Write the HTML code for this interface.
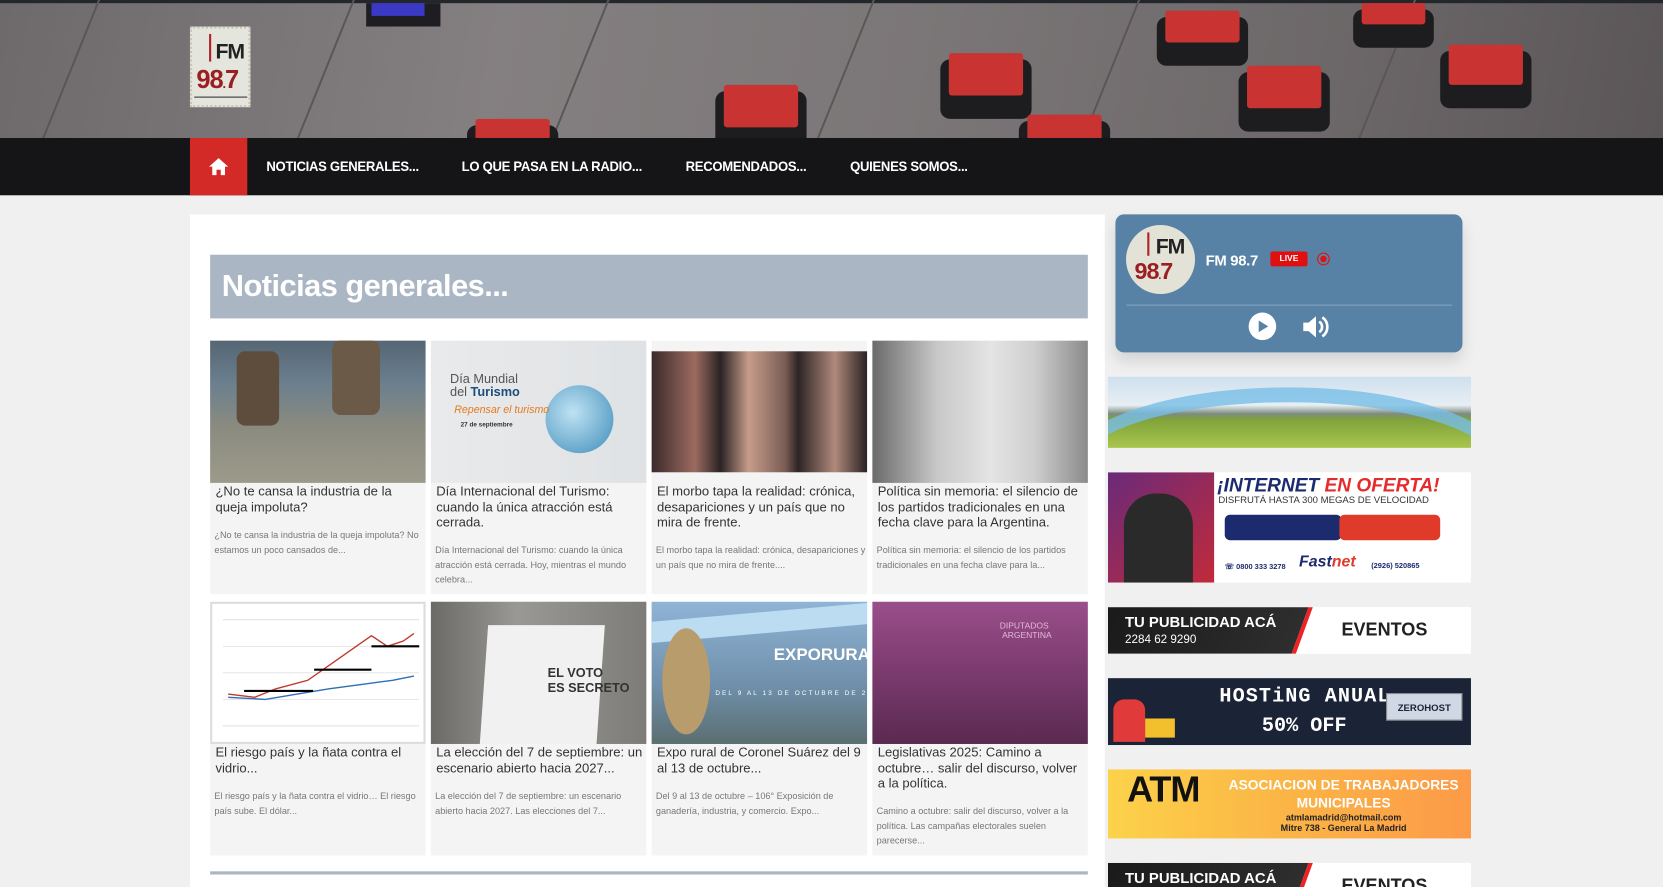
<!DOCTYPE html>
<html><head><meta charset="utf-8">
<style>
*{margin:0;padding:0;box-sizing:border-box}
html,body{width:1663px;height:887px;overflow:hidden;background:#f0f0f0;font-family:"Liberation Sans",sans-serif}
#w{position:absolute;left:0;top:0;width:1567px;height:836px;transform:scale(1.0613);transform-origin:0 0;background:#f0f0f0;overflow:hidden}
.a{position:absolute}
.hdr{left:0;top:0;width:1567px;height:130px;overflow:hidden;background:linear-gradient(100deg,#6e6a6c 0%,#847f80 30%,#7b7677 55%,#6c6768 80%,#5a5557 100%)}
.stripe{position:absolute;top:-20px;width:2px;height:200px;background:#5a5657;transform:skewX(-22deg)}
.btn{position:absolute;background:#c93331;border-radius:3px;box-shadow:0 14px 0 8px #1d1d1f}
.nav{left:0;top:130px;width:1567px;height:54px;background:#151517}
.nav span{position:absolute;top:19px;color:#fff;font-weight:bold;font-size:13px;letter-spacing:-.3px;transform:scaleX(.95);transform-origin:0 0}
.panel{left:179px;top:202px;width:862px;height:700px;background:#fff}
.hbar{left:198px;top:240px;width:827px;height:60px;background:#aab6c3;color:#fff;font-weight:bold;font-size:29px;padding:14px 0 0 11px;letter-spacing:-.5px}
.card{position:absolute;width:203px;background:#f4f4f4}
.img{position:absolute;left:0;top:0;width:203px;height:134px}
.t{position:absolute;left:5px;top:135px;width:196px;font-size:12.3px;line-height:14.5px;color:#333}
.e{position:absolute;left:4px;width:198px;font-size:8.6px;line-height:14px;color:#777}
.ban{position:absolute;left:1044px;width:342px;overflow:hidden}
</style></head><body><div id="w">
<div class="a hdr">
 <div style="position:absolute;left:0;top:0;width:1567px;height:3px;background:#23272b"></div>
 <div class="stripe" style="left:60px"></div><div class="stripe" style="left:300px"></div><div class="stripe" style="left:540px"></div><div class="stripe" style="left:790px"></div><div class="stripe" style="left:1040px"></div><div class="stripe" style="left:1300px"></div>
 <div style="position:absolute;left:345px;top:3px;width:70px;height:22px;background:#1e1e22"></div>
 <div style="position:absolute;left:350px;top:3px;width:50px;height:12px;background:#3a39c6"></div>
 <div class="btn" style="left:448px;top:112px;width:70px;height:30px"></div>
 <div class="btn" style="left:682px;top:80px;width:70px;height:40px"></div>
 <div class="btn" style="left:894px;top:50px;width:70px;height:40px"></div>
 <div class="btn" style="left:968px;top:108px;width:70px;height:30px"></div>
 <div class="btn" style="left:1098px;top:10px;width:70px;height:30px"></div>
 <div class="btn" style="left:1175px;top:62px;width:70px;height:40px"></div>
 <div class="btn" style="left:1283px;top:3px;width:60px;height:20px"></div>
 <div class="btn" style="left:1365px;top:42px;width:70px;height:38px"></div>
 <div style="position:absolute;left:179px;top:25px;width:57px;height:76px;background:#e4e5dc;border:2px dotted #c9c4b6"></div>
 <div style="position:absolute;left:197px;top:32px;width:2px;height:26px;background:#b02226"></div>
 <div style="position:absolute;left:203px;top:38px;font:bold 20px 'Liberation Sans Narrow','Liberation Sans',sans-serif;color:#222;letter-spacing:-1px">FM</div>
 <div style="position:absolute;left:185px;top:62px;font:bold 24px 'Liberation Sans Narrow','Liberation Sans',sans-serif;color:#9b1f22;letter-spacing:-1px">98<span style="font-size:12px">.</span>7</div>
 <div style="position:absolute;left:183px;top:91px;width:50px;height:1px;background:#333"></div>
</div>
<div class="a nav">
 <div style="position:absolute;left:179px;top:0;width:54px;height:54px;background:#d42a27"></div>
 <svg style="position:absolute;left:196px;top:18px" width="20" height="18" viewBox="0 0 20 18"><path d="M10 1L1 9h3v8h4v-5h4v5h4V9h3z" fill="#fff"/></svg>
 <span style="left:251px">NOTICIAS GENERALES...</span>
 <span style="left:435px">LO QUE PASA EN LA RADIO...</span>
 <span style="left:646px">RECOMENDADOS...</span>
 <span style="left:801px">QUIENES SOMOS...</span>
</div>
<div class="a panel"></div>
<div class="a hbar">Noticias generales...</div>

<div class="card" style="left:198px;top:321px;height:239px">
 <div class="img" style="background:linear-gradient(180deg,#556674 0%,#6b7f8e 30%,#8a8b80 60%,#9c9a8a 100%)"><div style="position:absolute;left:25px;top:10px;width:40px;height:70px;background:#5e4c3c;border-radius:8px"></div><div style="position:absolute;left:115px;top:0;width:45px;height:70px;background:#6a5a47;border-radius:8px"></div></div>
 <div class="t">¿No te cansa la industria de la queja impoluta?</div>
 <div class="e" style="top:176px">¿No te cansa la industria de la queja impoluta? No estamos un poco cansados de...</div>
</div>
<div class="card" style="left:406px;top:321px;height:239px">
 <div class="img" style="background:linear-gradient(90deg,#e9eaec,#dfe2e4)"><div style="position:absolute;left:108px;top:42px;width:64px;height:64px;border-radius:50%;background:radial-gradient(circle at 40% 40%,#bfe2f3,#3e8dba)"></div><div style="position:absolute;left:18px;top:30px;font-size:12px;color:#555;line-height:12px">Día Mundial<br>del <b style="color:#1d4e7a">Turismo</b></div><div style="position:absolute;left:22px;top:60px;font-size:10px;color:#e57a1e;font-style:italic">Repensar el turismo</div><div style="position:absolute;left:28px;top:77px;font-size:6px;color:#333;font-weight:bold">27 de septiembre</div></div>
 <div class="t">Día Internacional del Turismo: cuando la única atracción está cerrada.</div>
 <div class="e" style="top:190px">Día Internacional del Turismo: cuando la única atracción está cerrada. Hoy, mientras el mundo celebra...</div>
</div>
<div class="card" style="left:614px;top:321px;height:239px">
 <div class="img" style="top:10px;height:114px;background:linear-gradient(90deg,#3a2a2a 0%,#9c6b60 20%,#2b2325 32%,#c79c8a 45%,#7a5d55 62%,#2c2424 68%,#b08a7c 85%,#2a2222 100%)"></div>
 <div class="t">El morbo tapa la realidad: crónica, desapariciones y un país que no mira de frente.</div>
 <div class="e" style="top:190px">El morbo tapa la realidad: crónica, desapariciones y un país que no mira de frente....</div>
</div>
<div class="card" style="left:822px;top:321px;height:239px">
 <div class="img" style="background:linear-gradient(90deg,#6a6a6a 0%,#c8c8c8 30%,#e4e4e4 55%,#cfcfcf 75%,#8a8a8a 100%)"></div>
 <div class="t">Política sin memoria: el silencio de los partidos tradicionales en una fecha clave para la Argentina.</div>
 <div class="e" style="top:190px">Política sin memoria: el silencio de los partidos tradicionales en una fecha clave para la...</div>
</div>

<div class="card" style="left:198px;top:567px;height:239px">
 <div class="img" style="background:#fff;border:2px solid #ddd"><svg width="199" height="130"><g stroke="#ccc" stroke-width=".5"><line x1="10" y1="15" x2="195" y2="15"/><line x1="10" y1="40" x2="195" y2="40"/><line x1="10" y1="65" x2="195" y2="65"/><line x1="10" y1="90" x2="195" y2="90"/><line x1="10" y1="115" x2="195" y2="115"/></g><polyline points="15,85 40,88 60,80 90,72 110,58 130,44 150,30 165,40 180,35 190,28" fill="none" stroke="#c0392b" stroke-width="1.3"/><polyline points="15,88 50,90 80,85 110,80 140,76 170,72 190,68" fill="none" stroke="#2e6fb5" stroke-width="1.3"/><g stroke="#000" stroke-width="2"><line x1="30" y1="82" x2="95" y2="82"/><line x1="96" y1="62" x2="150" y2="62"/><line x1="150" y1="40" x2="195" y2="40"/></g></svg></div>
 <div class="t">El riesgo país y la ñata contra el vidrio...</div>
 <div class="e" style="top:176px">El riesgo país y la ñata contra el vidrio… El riesgo país sube. El dólar...</div>
</div>
<div class="card" style="left:406px;top:567px;height:239px">
 <div class="img" style="background:linear-gradient(90deg,#6c6a66,#9a9894 40%,#7e7c78)"><div style="position:absolute;left:50px;top:22px;width:110px;height:112px;background:#f1f1f1;transform:skewX(-4deg)"></div><div style="position:absolute;left:110px;top:60px;font-size:12px;color:#333;font-weight:bold;line-height:14px">EL VOTO<br>ES SECRETO</div></div>
 <div class="t">La elección del 7 de septiembre: un escenario abierto hacia 2027...</div>
 <div class="e" style="top:176px">La elección del 7 de septiembre: un escenario abierto hacia 2027. Las elecciones del 7...</div>
</div>
<div class="card" style="left:614px;top:567px;height:239px">
 <div class="img" style="background:linear-gradient(180deg,#8fb4d6,#6f8faa 60%,#5b6e70);overflow:hidden"><div style="position:absolute;left:0;top:10px;width:203px;height:20px;background:#bcdcf2;transform:skewY(-5deg)"></div><div style="position:absolute;left:10px;top:25px;width:45px;height:100px;border-radius:50%;background:#b99c6c"></div><div style="position:absolute;left:115px;top:42px;font-size:16px;font-weight:bold;color:#fff">EXPORURAL</div><div style="position:absolute;left:60px;top:84px;font-size:6px;color:#fff;letter-spacing:2px;white-space:nowrap">DEL 9 AL 13 DE OCTUBRE DE 2025</div></div>
 <div class="t">Expo rural de Coronel Suárez del 9 al 13 de octubre...</div>
 <div class="e" style="top:176px">Del 9 al 13 de octubre – 106° Exposición de ganadería, industria, y comercio. Expo...</div>
</div>
<div class="card" style="left:822px;top:567px;height:239px">
 <div class="img" style="background:linear-gradient(180deg,#9a4f8a,#7a3a6e 50%,#5a2a50)"><div style="position:absolute;left:120px;top:18px;font-size:8px;color:#e6b8da">DIPUTADOS<br>&nbsp;ARGENTINA</div></div>
 <div class="t">Legislativas 2025: Camino a octubre… salir del discurso, volver a la política.</div>
 <div class="e" style="top:190px">Camino a octubre: salir del discurso, volver a la política. Las campañas electorales suelen parecerse...</div>
</div>
<div class="a" style="left:198px;top:821px;width:827px;height:3px;background:#aab6c3"></div>

<div class="a" style="left:1051px;top:202px;width:327px;height:130px;background:#5782a6;border-radius:8px;box-shadow:0 8px 14px rgba(0,0,0,.12)">
 <div style="position:absolute;left:10px;top:10px;width:65px;height:65px;border-radius:50%;background:#e3e2d6;overflow:hidden">
  <div style="position:absolute;left:20px;top:7px;width:2px;height:22px;background:#b02226"></div>
  <div style="position:absolute;left:28px;top:10px;font:bold 20px 'Liberation Sans',sans-serif;color:#222;letter-spacing:-1px">FM</div>
  <div style="position:absolute;left:8px;top:31px;font:bold 22px 'Liberation Sans',sans-serif;color:#9b1f22;letter-spacing:-1px">98<span style="font-size:10px">.</span>7</div>
 </div>
 <div style="position:absolute;left:85px;top:35px;color:#fff;font-weight:bold;font-size:14px;letter-spacing:-.3px">FM 98.7</div>
 <div style="position:absolute;left:146px;top:35px;width:35px;height:14px;background:#e01010;border-radius:2px;color:#fff;font-size:8px;font-weight:bold;text-align:center;line-height:14px">LIVE</div>
 <div style="position:absolute;left:190px;top:36px;width:12px;height:12px;border:1px solid #e01010;border-radius:50%"><div style="margin:2px;width:6px;height:6px;border-radius:50%;background:#e01010"></div></div>
 <div style="position:absolute;left:10px;top:85px;width:307px;height:1px;background:#86a3bd"></div>
 <svg style="position:absolute;left:125px;top:92px" width="27" height="27" viewBox="0 0 27 27"><circle cx="13.5" cy="13.5" r="13" fill="#fff"/><path d="M10 8l9 5.5-9 5.5z" fill="#5782a6"/></svg>
 <svg style="position:absolute;left:175px;top:92px" width="28" height="28" viewBox="0 0 28 28"><path d="M2 10h5l7-6v20l-7-6H2z" fill="#fff"/><path d="M17 9a6 6 0 010 10" stroke="#fff" stroke-width="2.5" fill="none"/><path d="M20 5a11 11 0 010 18" stroke="#fff" stroke-width="2.5" fill="none"/></svg>
</div>

<div class="ban" style="top:355px;height:67px;background:linear-gradient(180deg,#cfe0ee 0%,#e7eef4 40%,#7d8c80 52%,#7fa23b 60%,#a9c64c 100%)"><div style="position:absolute;left:-40px;top:10px;width:420px;height:150px;border:14px solid rgba(120,190,230,.8);border-radius:50%"></div></div>
<div class="ban" style="top:445px;height:104px;background:#fff">
 <div style="position:absolute;left:0;top:0;width:100px;height:104px;background:linear-gradient(135deg,#6a2a7a,#c12a3a)"></div>
 <div style="position:absolute;left:15px;top:20px;width:65px;height:84px;background:#2a2a2a;border-radius:30px 30px 0 0"></div>
 <div style="position:absolute;left:103px;top:2px;font:italic bold 18px 'Liberation Sans',sans-serif;color:#1c2a6e">¡INTERNET <span style="color:#e52b2b">EN OFERTA!</span></div>
 <div style="position:absolute;left:104px;top:21px;font-size:9px;color:#333">DISFRUTÁ HASTA 300 MEGAS DE VELOCIDAD</div>
 <div style="position:absolute;left:110px;top:40px;width:110px;height:24px;background:#1c2a6e;border-radius:5px"></div>
 <div style="position:absolute;left:218px;top:40px;width:95px;height:24px;background:#e03a2a;border-radius:5px"></div>
 <div style="position:absolute;left:110px;top:85px;font-size:7px;font-weight:bold;color:#1c2a6e">☏ 0800 333 3278</div>
 <div style="position:absolute;left:180px;top:76px;font:italic bold 15px 'Liberation Sans',sans-serif;color:#1c2a6e">Fast<span style="color:#e03a2a">net</span></div>
 <div style="position:absolute;left:248px;top:85px;font-size:7px;font-weight:bold;color:#1c2a6e">(2926) 520865</div>
</div>
<div class="ban" style="top:572px;height:44px;background:#fff">
 <div style="position:absolute;left:-10px;top:0;width:195px;height:44px;background:linear-gradient(90deg,#1a1a1a,#2e2e2e);transform:skewX(-20deg);border-right:4px solid #e22"></div>
 <div style="position:absolute;left:16px;top:6px;color:#fff;font-weight:bold;font-size:14px">TU PUBLICIDAD ACÁ</div>
 <div style="position:absolute;left:16px;top:25px;color:#fff;font-size:11px">2284 62 9290</div>
 <div style="position:absolute;left:220px;top:12px;color:#222;font-weight:bold;font-size:17px">EVENTOS</div>
</div>
<div class="ban" style="top:639px;height:63px;background:#1b2436">
 <div style="position:absolute;left:5px;top:20px;width:30px;height:40px;background:#e03a3a;border-radius:10px 10px 0 0"></div>
 <div style="position:absolute;left:35px;top:38px;width:28px;height:18px;background:#f2c02c"></div>
 <div style="position:absolute;left:105px;top:6px;color:#fff;font:bold 19px 'Liberation Mono',monospace;letter-spacing:1px">HOSTiNG ANUAL</div>
 <div style="position:absolute;left:145px;top:34px;color:#fff;font:bold 19px 'Liberation Mono',monospace">50% OFF</div>
 <div style="position:absolute;left:262px;top:14px;width:72px;height:26px;background:#cfd8e4;border:1px solid #888;font-size:9px;font-weight:bold;color:#1b2436;text-align:center;line-height:26px">ZEROHOST</div>
</div>
<div class="ban" style="top:725px;height:65px;background:linear-gradient(90deg,#fcd24a,#fbb446 50%,#fc9a48)">
 <div style="position:absolute;left:18px;top:0;font:bold 34px 'Liberation Sans Narrow','Liberation Sans',sans-serif;color:#111;letter-spacing:-1px">ATM</div>
 <div style="position:absolute;left:104px;top:6px;width:236px;text-align:center;color:#fff;font-weight:bold;font-size:13px;line-height:17px">ASOCIACION DE TRABAJADORES<br>MUNICIPALES</div>
 <div style="position:absolute;left:104px;top:40px;width:236px;text-align:center;color:#222;font-weight:bold;font-size:8.5px;line-height:10px">atmlamadrid@hotmail.com<br>Mitre 738 - General La Madrid</div>
</div>
<div class="ban" style="top:813px;height:44px;background:#fff">
 <div style="position:absolute;left:-10px;top:0;width:195px;height:44px;background:linear-gradient(90deg,#1a1a1a,#2e2e2e);transform:skewX(-20deg);border-right:4px solid #e22"></div>
 <div style="position:absolute;left:16px;top:6px;color:#fff;font-weight:bold;font-size:14px">TU PUBLICIDAD ACÁ</div>
 <div style="position:absolute;left:220px;top:12px;color:#222;font-weight:bold;font-size:17px">EVENTOS</div>
</div>
</div></body></html>
